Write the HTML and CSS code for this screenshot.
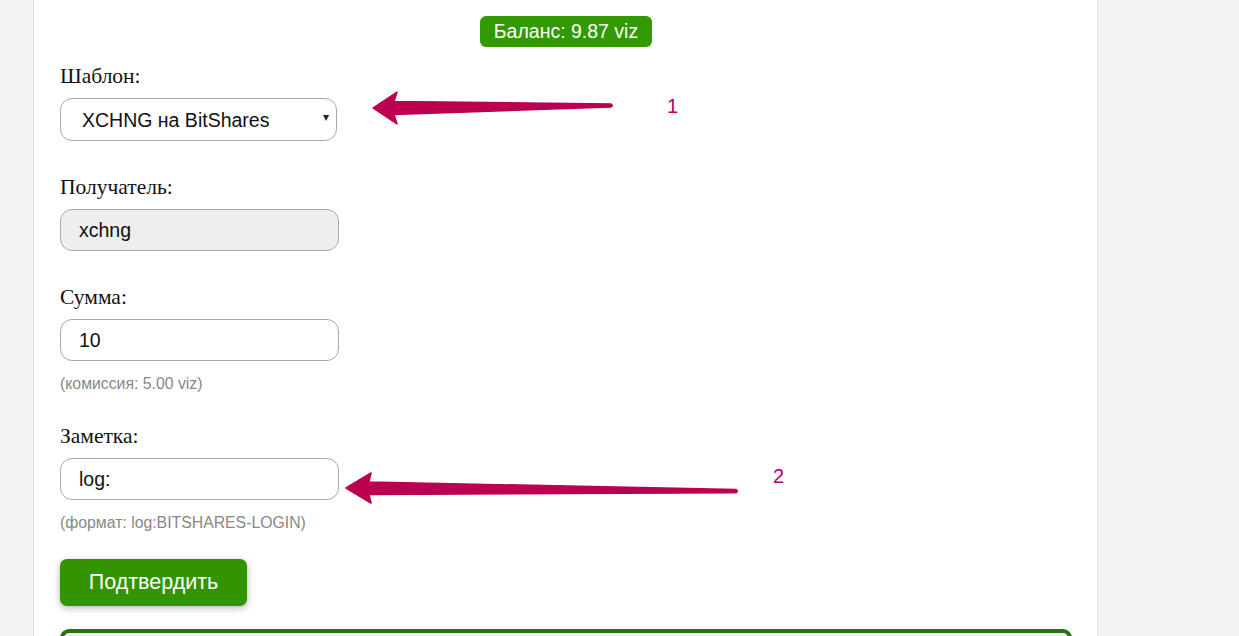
FILE: index.html
```html
<!DOCTYPE html>
<html lang="ru">
<head>
<meta charset="utf-8">
<title>Перевод</title>
<link rel="stylesheet" href="styles.css">
</head>
<body>
<div class="page">
  <main class="panel">
    <div class="balance-row"><span class="balance">Баланс: 9.87 viz</span></div>
    <form class="form">
      <div class="field">
        <label class="label">Шаблон:</label>
        <div class="select-wrap">
          <select class="control select"><option>XCHNG на BitShares</option></select>
          <span class="caret">▾</span>
        </div>
      </div>
      <div class="field">
        <label class="label">Получатель:</label>
        <input class="control input readonly" value="xchng" readonly>
      </div>
      <div class="field">
        <label class="label">Сумма:</label>
        <input class="control input" value="10">
        <div class="hint">(комиссия: 5.00 viz)</div>
      </div>
      <div class="field">
        <label class="label">Заметка:</label>
        <input class="control input" value="log:">
        <div class="hint">(формат: log:BITSHARES-LOGIN)</div>
      </div>
      <div class="actions"><button type="button" class="btn">Подтвердить</button></div>
      <div class="result"></div>
    </form>
  </main>
  <svg class="overlay" width="1239" height="636" viewBox="0 0 1239 636">
    <g fill="#bb0052" stroke="#bb0052" stroke-width="1.5" stroke-linejoin="round">
      <polygon points="373,108 397,92 394,101.5 611,104 612.5,105.5 611,107 394,114.5 397,124"/>
      <polygon points="346,488 371,473 369,482 736,489.5 737.5,491 736,492.8 369,494.5 371,503"/>
    </g>
    <text x="667" y="113" class="num">1</text>
    <text x="773" y="483" class="num">2</text>
  </svg>
</div>
</body>
</html>
```
FILE: styles.css
```css
html, body {
  margin: 0;
  padding: 0;
  background: #f2f2f2;
}
.page {
  position: relative;
  width: 1239px;
  height: 636px;
  overflow: hidden;
}
.panel {
  margin-left: 33px;
  width: 1012px;
  padding: 16px 25px 0 26px;
  background: #fff;
  border-left: 1px solid #e2e2e2;
  border-right: 1px solid #e2e2e2;
  min-height: 700px;
}
.balance-row {
  display: flex;
  justify-content: center;
}
.balance {
  display: inline-block;
  height: 31px;
  line-height: 31px;
  padding: 0 14px;
  background: #339900;
  color: #fff;
  border-radius: 6px;
  font-family: "Liberation Sans", Arial, sans-serif;
  font-size: 19.5px;
}
.form {
  display: flex;
  flex-direction: column;
  margin-top: 17px;
}
.field {
  display: flex;
  flex-direction: column;
  align-items: flex-start;
  margin-bottom: 34px;
}
.label {
  font-family: "Liberation Serif", "Times New Roman", serif;
  font-size: 21.5px;
  line-height: 24px;
  color: #111;
  margin-bottom: 10px;
}
.control {
  box-sizing: border-box;
  height: 43px;
  border: 1px solid #a9a9a9;
  border-radius: 12px;
  font-family: "Liberation Sans", Arial, sans-serif;
  font-size: 19.5px;
  color: #111;
  background: #fff;
  outline: none;
  margin: 0;
}
.select-wrap {
  position: relative;
}
.select {
  width: 277px;
  padding: 0 30px 0 21px;
  appearance: none;
  -webkit-appearance: none;
}
.caret {
  position: absolute;
  right: 8px;
  top: 12px;
  font-size: 12px;
  color: #222;
  font-family: "DejaVu Sans", sans-serif;
  pointer-events: none;
}
.input {
  width: 279px;
  height: 42px;
  padding: 0 18px;
}
.readonly {
  background: #eeeeee;
}
.hint {
  margin-top: 14px;
  font-family: "Liberation Sans", Arial, sans-serif;
  font-size: 15.8px;
  line-height: 18px;
  color: #888;
}
.field:nth-of-type(3) {
  margin-bottom: 31px;
}
.field:nth-of-type(4) {
  margin-bottom: 27px;
}
.actions {
  display: flex;
}
.btn {
  width: 187px;
  height: 47px;
  border: none;
  border-radius: 7px;
  background: #339400;
  color: #fff;
  font-family: "Liberation Sans", Arial, sans-serif;
  font-size: 21.5px;
  box-shadow: 0 2px 7px rgba(0, 0, 0, 0.3);
  cursor: pointer;
}
.result {
  margin-top: 23px;
  height: 100px;
  border: 4px solid #2b720c;
  border-radius: 9px;
  background: #f0f0f0;
}
.overlay {
  position: absolute;
  left: 0;
  top: 0;
  pointer-events: none;
}
.num {
  font-family: "Liberation Sans", Arial, sans-serif;
  font-size: 20px;
  fill: #b3006c;
}
```
